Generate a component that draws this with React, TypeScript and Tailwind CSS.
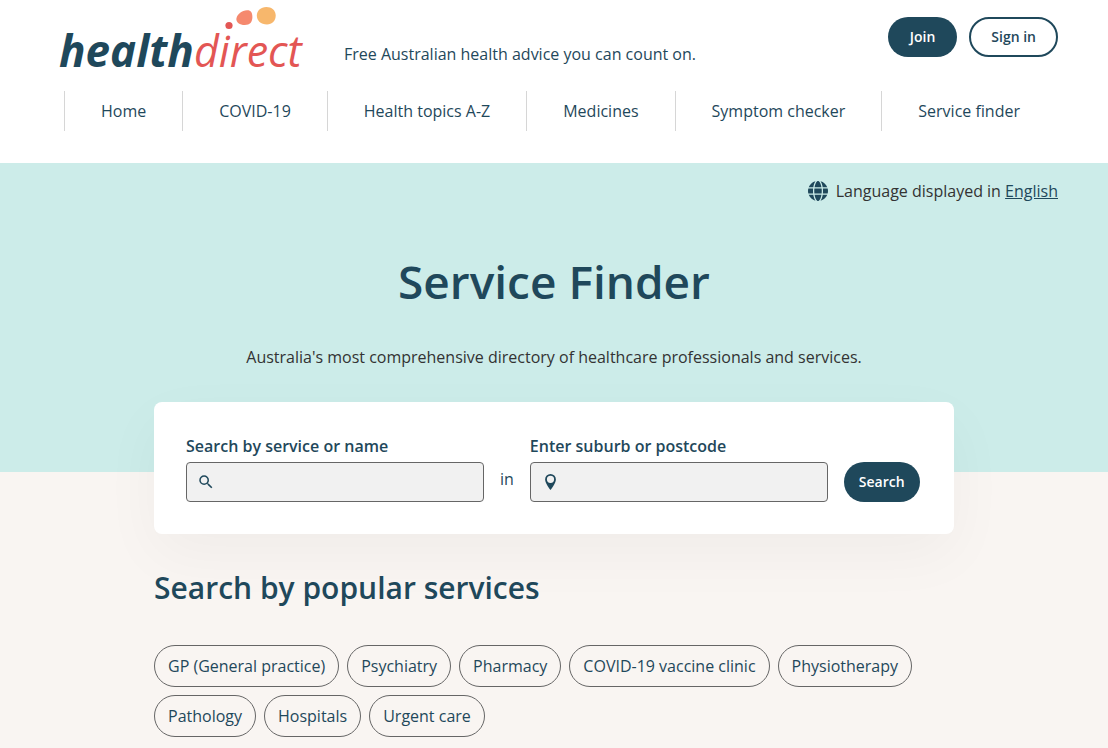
import { FaGlobe } from 'react-icons/fa6';

const navItems = ['Home', 'COVID-19', 'Health topics A-Z', 'Medicines', 'Symptom checker', 'Service finder'];

const popularServices = [
  'GP (General practice)',
  'Psychiatry',
  'Pharmacy',
  'COVID-19 vaccine clinic',
  'Physiotherapy',
  'Pathology',
  'Hospitals',
  'Urgent care',
];

const Logo = () => (
  <svg width="260" height="88" viewBox="0 0 260 88" role="img" aria-label="healthdirect">
    <circle cx="179" cy="25.500" r="3.600" fill="#e35654" />
    <path d="M186.400 18.500c1-4.500 5.600-8 10.600-8.200 3.800-.2 5.400 2.300 5.400 6.700 0 5-2.400 8-7.600 8-5 0-9-2.700-8.400-6.500z" fill="#f5896e" />
    <path d="M206.800 15.500c0-5 4-8.600 9.500-8.600 5.300 0 9.400 3.200 9.400 8.600 0 5.500-3.700 9-8.700 9-6.300 0-10.200-4-10.200-9z" fill="#f7b76c" />
    <text x="9" y="67" fontSize="44" fontWeight="700" fontStyle="italic" fill="#1f485b">health</text>
    <text x="144" y="67" fontSize="43" fontWeight="400" fontStyle="italic" fill="#e35654">direct</text>
  </svg>
);

const SearchIcon = () => (
  <svg className="absolute top-[11px] left-[11px] size-[18px]" viewBox="0 0 24 24" fill="#1f485b" aria-hidden="true">
    <path d="M15.500 14h-.79l-.28-.27A6.471 6.471 0 0 0 16 9.500 6.500 6.500 0 1 0 9.500 16c1.610 0 3.090-.59 4.230-1.570l.27.28v.79l5 4.990L20.490 19l-4.990-5zm-6 0C7.010 14 5 11.990 5 9.500S7.010 5 9.500 5 14 7.010 14 9.500 11.990 14 9.500 14z" />
  </svg>
);

const PinIcon = () => (
  <svg className="absolute top-[11px] left-[11px] size-[18px]" viewBox="0 0 18 18" aria-hidden="true">
    <path fillRule="evenodd" fill="#1f485b" d="M9.500 1a5.400 5.400 0 0 0-5.400 5.400C4.100 10.300 9.500 17 9.500 17s5.400-6.700 5.400-10.600A5.400 5.400 0 0 0 9.500 1zm0 1.700a3.600 3.600 0 1 1 0 7.200 3.600 3.600 0 0 1 0-7.200z" />
  </svg>
);

const Header = () => (
  <header className="bg-white px-[50px] pb-8">
    <div className="flex h-[91px] items-start">
      <a href="#home"><Logo /></a>
      <p className="mt-[42px] ml-[34px] leading-6">
        Free Australian health advice you can count on.
      </p>
      <div className="mt-[17px] ml-auto flex gap-3 text-sm font-semibold">
        <button className="h-10 rounded-full bg-[#1f485b] px-[22px] text-white">Join</button>
        <button className="h-10 rounded-full border-2 border-[#1f485b] px-5">Sign in</button>
      </div>
    </div>
    <nav className="ml-[14px] flex">
      {navItems.map((item) => (
        <a key={item} href="#nav" className="border-l border-[#d6d6d6] px-9 leading-10 whitespace-nowrap">
          {item}
        </a>
      ))}
    </nav>
  </header>
);

const SearchCard = () => (
  <form className="mx-auto -mb-[62px] flex w-full max-w-[800px] items-end gap-4 rounded-lg bg-white p-8 shadow-[0_20px_60px_rgba(0,0,0,0.040)]">
    <div className="w-[298px]">
      <label htmlFor="service" className="mb-1 block leading-6 font-semibold">Search by service or name</label>
      <div className="relative">
        <input id="service" className="block h-10 w-full rounded border border-[#666] bg-[#f1f1f1] pr-3 pl-10" />
        <SearchIcon />
      </div>
    </div>
    <span className="mb-[11px] leading-6 font-medium">in</span>
    <div className="w-[298px]">
      <label htmlFor="suburb" className="mb-1 block leading-6 font-semibold">Enter suburb or postcode</label>
      <div className="relative">
        <input id="suburb" className="block h-10 w-full rounded border border-[#666] bg-[#f1f1f1] pr-3 pl-10" />
        <PinIcon />
      </div>
    </div>
    <button type="button" className="h-10 rounded-full bg-[#1f485b] px-[15px] text-sm font-semibold text-white">Search</button>
  </form>
);

const App = () => (
  <div className="min-h-screen bg-[#f9f5f2] font-['Open_Sans',sans-serif] text-base text-[#1f485b]">
    <Header />
    <main>
      <section className="flow-root bg-[#ccece9] pt-4">
        <p className="flex items-center justify-end gap-2 px-[50px] leading-6 text-[#333]">
          <FaGlobe className="size-5 text-[#1f485b]" aria-hidden="true" />
          <span>
            Language displayed in <a href="#language" className="text-[#1f485b] underline">English</a>
          </span>
        </p>
        <h1 className="mt-[46px] text-center text-[46px] leading-16 font-semibold">Service Finder</h1>
        <p className="mt-8 mb-[33px] text-center leading-6 text-[#333]">
          Australia's most comprehensive directory of healthcare professionals and services.
        </p>
        <SearchCard />
      </section>
      <section className="mx-auto max-w-[800px] pt-24 pb-[11px]">
        <h2 className="text-3xl leading-10 font-semibold">Search by popular services</h2>
        <ul className="mt-[37px] flex flex-wrap gap-2">
          {popularServices.map((service) => (
            <li key={service}>
              <a href="#service" className="block rounded-full border border-[#666] px-[13px] leading-10">{service}</a>
            </li>
          ))}
        </ul>
      </section>
    </main>
  </div>
);

export default App;
